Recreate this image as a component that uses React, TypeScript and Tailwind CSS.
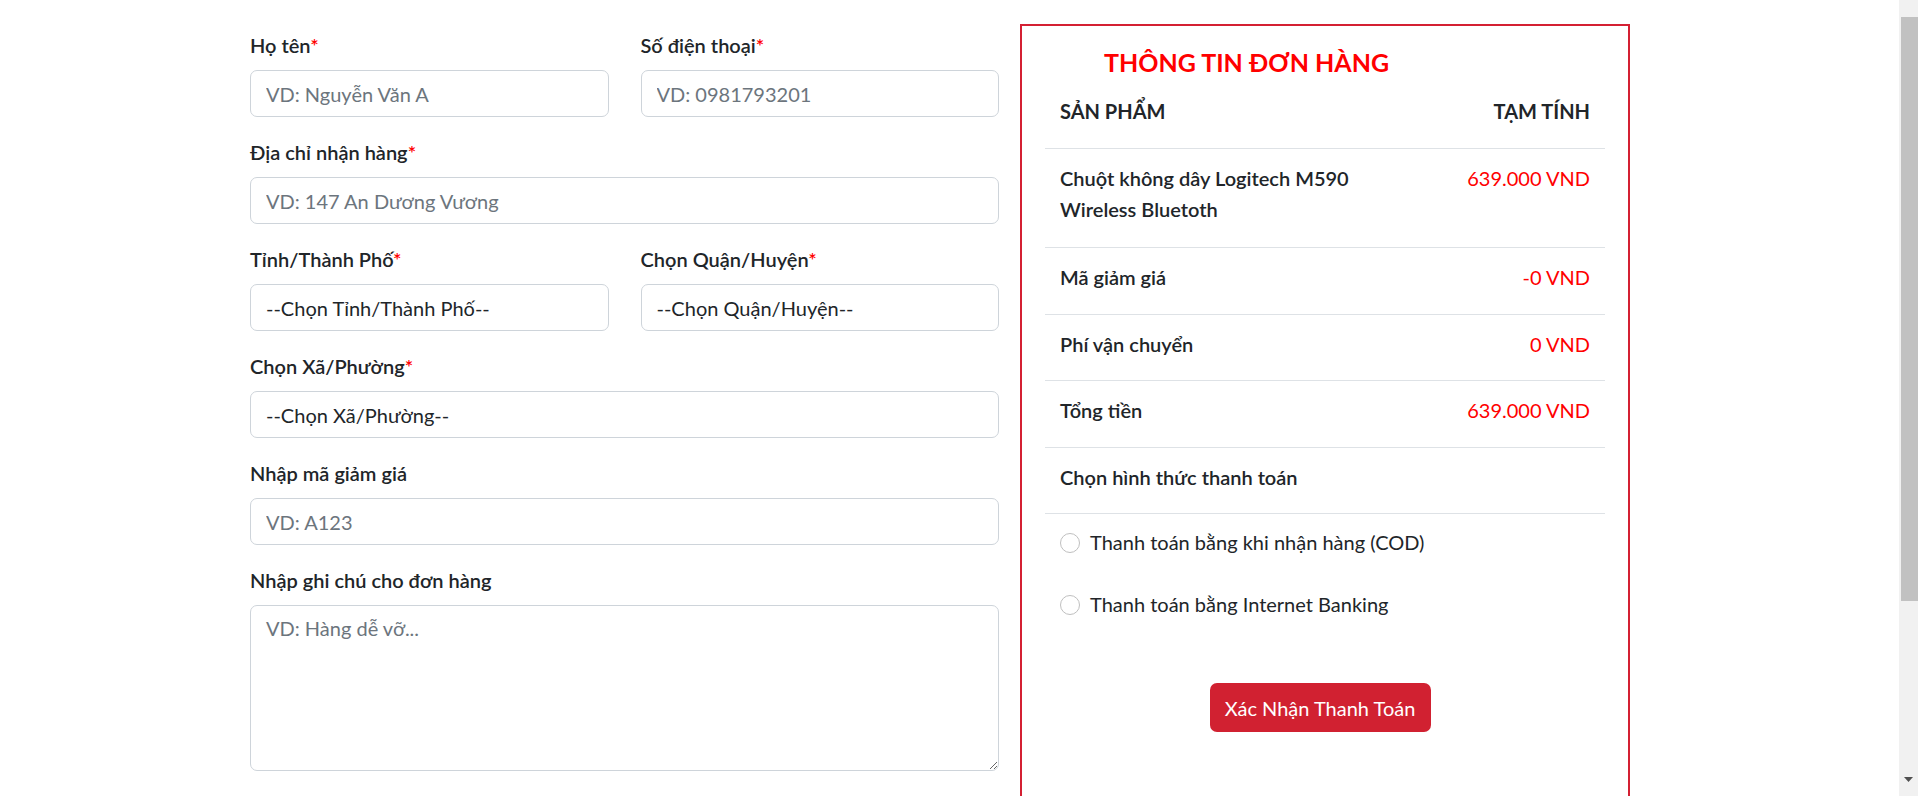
import { ReactNode } from 'react'

const font = "font-['Lato','Noto_Sans',sans-serif]"

function Label({ children, required }: { children: ReactNode; required?: boolean }) {
  return (
    <label className="block mb-[10px] text-[20px] leading-[30px] font-semibold text-[#212529]">
      {children}
      {required && <span className="text-[#ff0000]">*</span>}
    </label>
  )
}

const inputCls =
  'block w-full h-[47px] px-[15px] rounded-[7px] border border-[#ced4da] bg-white text-[20px] text-[#212529] placeholder:text-[#6c757d] outline-none'

function TextField({ label, placeholder, required }: { label: string; placeholder: string; required?: boolean }) {
  return (
    <div>
      <Label required={required}>{label}</Label>
      <input className={inputCls} placeholder={placeholder} />
    </div>
  )
}

function SelectField({ label, option }: { label: string; option: string }) {
  return (
    <div>
      <Label required>{label}</Label>
      <select className={inputCls + ' appearance-none'} defaultValue="">
        <option value="">{option}</option>
      </select>
    </div>
  )
}

const rows = [
  { label: 'Mã giảm giá', value: '-0 VND' },
  { label: 'Phí vận chuyển', value: '0 VND' },
  { label: 'Tổng tiền', value: '639.000 VND' },
]

const payments = ['Thanh toán bằng khi nhận hàng (COD)', 'Thanh toán bằng Internet Banking']

export default function App() {
  return (
    <div className={`${font} h-[796px] overflow-hidden flex bg-white`}>
      <main className="flex-1 flex items-start gap-[21px] pl-[250px] pt-[24px]">
        <form className="w-[749px] pt-[6px] flex flex-col gap-[20px]">
          <div className="grid grid-cols-2 gap-x-[32px]">
            <TextField label="Họ tên" placeholder="VD: Nguyễn Văn A" required />
            <TextField label="Số điện thoại" placeholder="VD: 0981793201" required />
          </div>
          <TextField label="Địa chỉ nhận hàng" placeholder="VD: 147 An Dương Vương" required />
          <div className="grid grid-cols-2 gap-x-[32px]">
            <SelectField label="Tỉnh/Thành Phố" option="--Chọn Tỉnh/Thành Phố--" />
            <SelectField label="Chọn Quận/Huyện" option="--Chọn Quận/Huyện--" />
          </div>
          <SelectField label="Chọn Xã/Phường" option="--Chọn Xã/Phường--" />
          <TextField label="Nhập mã giảm giá" placeholder="VD: A123" />
          <div>
            <Label>Nhập ghi chú cho đơn hàng</Label>
            <textarea
              className="block w-full h-[166px] px-[15px] py-[7px] rounded-[7px] border border-[#ced4da] text-[20px] leading-[30px] text-[#212529] placeholder:text-[#6c757d] outline-none"
              placeholder="VD: Hàng dễ vỡ..."
            />
          </div>
        </form>

        <aside className="w-[610px] h-[900px] border-2 border-[#d42033] pt-[20px] px-[23px] text-[20px] leading-[30px] text-[#212529]">
          <h3 className="pl-[59px] text-[25px] leading-[32px] font-bold text-[#ff0000]">THÔNG TIN ĐƠN HÀNG</h3>
          <div className="mt-[4px]">
            <div className="flex justify-between px-[15px] pt-[14px] pb-[22px] border-b border-[#dee2e6] font-bold">
              <span>SẢN PHẨM</span>
              <span>TẠM TÍNH</span>
            </div>
            <div className="flex justify-between px-[15px] pt-[14px] pb-[22px] border-b border-[#dee2e6] leading-[31px] font-semibold">
              <span className="w-[330px]">Chuột không dây Logitech M590 Wireless Bluetoth</span>
              <span className="text-[#ff0000] font-normal">639.000 VND</span>
            </div>
            {rows.map((r) => (
              <div key={r.label} className="flex justify-between px-[15px] pt-[14px] pb-[21.5px] border-b border-[#dee2e6]">
                <span className="font-semibold">{r.label}</span>
                <span className="text-[#ff0000]">{r.value}</span>
              </div>
            ))}
            <div className="px-[15px] pt-[14px] pb-[21.5px] border-b border-[#dee2e6] font-semibold">
              Chọn hình thức thanh toán
            </div>
            <div className="flex flex-col gap-[32px] px-[15px] pt-[13px]">
              {payments.map((p) => (
                <label key={p} className="flex items-start gap-[10px]">
                  <input
                    type="radio"
                    name="payment"
                    className="appearance-none mt-[6px] w-[20px] h-[20px] rounded-full border border-[#bfbfbf] bg-white"
                  />
                  <span>{p}</span>
                </label>
              ))}
            </div>
            <div className="flex justify-center pt-[64px] pr-[10px]">
              <button
                type="button"
                className="w-[221px] h-[49px] rounded-[7px] bg-[#d12131] text-white text-[20px]"
              >
                Xác Nhận Thanh Toán
              </button>
            </div>
          </div>
        </aside>
      </main>

      <div className="w-[19px] bg-[#f1f1f1] flex flex-col">
        <div className="h-[17px]" />
        <div className="h-[584px] ml-[2px] bg-[#c1c1c1]" />
        <div className="flex-1 flex items-end justify-center pb-[14px]">
          <svg width="9" height="5" viewBox="0 0 9 5">
            <path d="M0 0h9L4.5 5z" fill="#505050" />
          </svg>
        </div>
      </div>
    </div>
  )
}
